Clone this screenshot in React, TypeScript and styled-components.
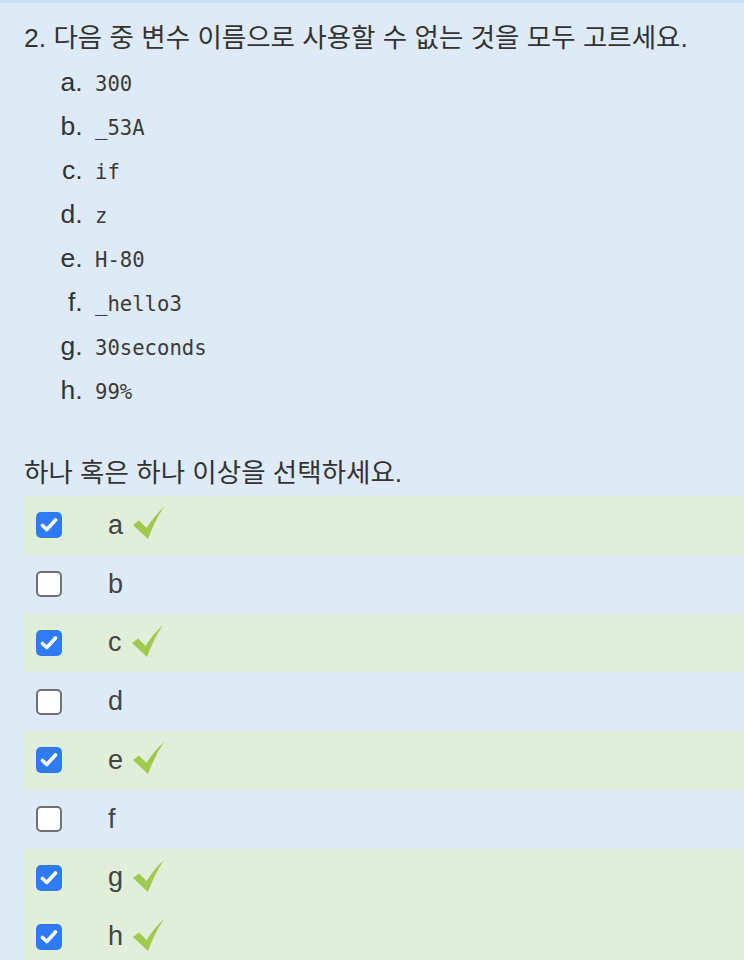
import styled, { createGlobalStyle } from "styled-components";

//styles
const GlobalStyle = createGlobalStyle`
  html, body {
    margin: 0;
    padding: 0;
    background: #deebf6;
  }
`;
const Page = styled.div`
  width: 744px;
  height: 960px;
  overflow: hidden;
  background: #deebf6;
  border-top: 3px solid #c8e3ef;
  box-sizing: border-box;
  padding: 15px 0 0 24px;
  font-family: "Liberation Sans", "Noto Sans CJK KR", sans-serif;
  color: #333;
`;
const Question = styled.div`
  font-size: 26.5px;
  line-height: 40px;
  height: 40px;
  white-space: nowrap;
`;
const Options = styled.ol`
  list-style: lower-alpha;
  margin: 2px 0 0 0;
  padding-left: 66px;
  font-size: 26.5px;
`;
const Option = styled.li`
  height: 44px;
  line-height: 44px;
  padding-left: 5px;
  color: #333;
`;
const Code = styled.code`
  font-family: "DejaVu Sans Mono", monospace;
  font-size: 20.6px;
  color: #3a3a3a;
`;
const Prompt = styled.div`
  margin-top: 43px;
  font-size: 26.5px;
  line-height: 36px;
  height: 36px;
  white-space: nowrap;
`;
const Answers = styled.div`
  margin-top: 5px;
  display: flex;
  flex-direction: column;
`;
const Row = styled.div<{ $correct: boolean }>`
  height: 58.75px;
  display: flex;
  align-items: center;
  padding-left: 12px;
  background: ${(p) => (p.$correct ? "#e1eed9" : "transparent")};
`;
const Box = styled.span<{ $checked: boolean }>`
  width: 26px;
  height: 26px;
  box-sizing: border-box;
  border-radius: 5px;
  display: flex;
  align-items: center;
  justify-content: center;
  background: ${(p) => (p.$checked ? "#2f7bf5" : "#fff")};
  border: ${(p) => (p.$checked ? "none" : "2px solid #707070")};
`;
const Letter = styled.span`
  margin-left: 46px;
  font-size: 27px;
  color: #444;
  display: inline-block;
  min-width: 14px;
`;
const Mark = styled.svg`
  margin-left: 10px;
  margin-top: -4px;
`;

const options = ["300", "_53A", "if", "z", "H-80", "_hello3", "30seconds", "99%"];
const answers = [
  { key: "a", checked: true },
  { key: "b", checked: false },
  { key: "c", checked: true },
  { key: "d", checked: false },
  { key: "e", checked: true },
  { key: "f", checked: false },
  { key: "g", checked: true },
  { key: "h", checked: true },
];

const Tick = () => (
  <svg width="18" height="16" viewBox="0 0 18 16">
    <path
      d="M2.5 8.5 L6.8 12.5 L15.5 3"
      fill="none"
      stroke="#fff"
      strokeWidth="3.6"
      strokeLinecap="round"
      strokeLinejoin="round"
    />
  </svg>
);

const Correct = () => (
  <Mark width="31" height="32" viewBox="0 0 31 32">
    <path d="M0 18 L6 13.5 L13.5 21 Q21 9 31 0 Q22 13 15 32 Z" fill="#a2c84e" />
  </Mark>
);

const App = () => {
  return (
    <Page>
      <GlobalStyle />
      <Question>2. 다음 중 변수 이름으로 사용할 수 없는 것을 모두 고르세요.</Question>
      <Options>
        {options.map((o) => (
          <Option key={o}>
            <Code>{o}</Code>
          </Option>
        ))}
      </Options>
      <Prompt>하나 혹은 하나 이상을 선택하세요.</Prompt>
      <Answers>
        {answers.map((a) => (
          <Row key={a.key} $correct={a.checked}>
            <Box $checked={a.checked}>{a.checked && <Tick />}</Box>
            <Letter>{a.key}</Letter>
            {a.checked && <Correct />}
          </Row>
        ))}
      </Answers>
    </Page>
  );
};

export default App;
